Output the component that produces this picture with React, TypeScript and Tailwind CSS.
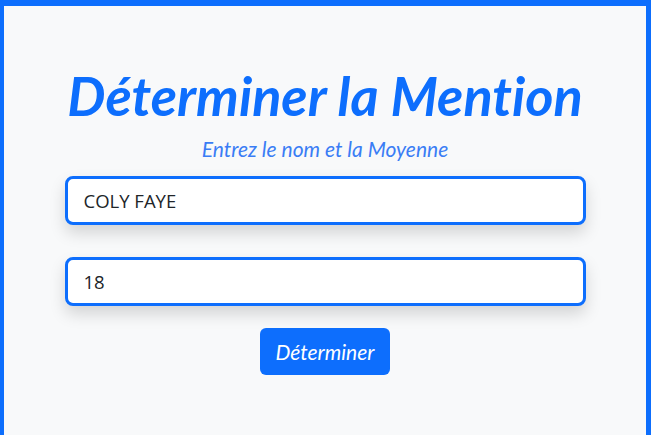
import React from 'react';

export default function App() {
  return (
    <div className="h-[435px] border-t-[6px] border-l-4 border-r-[5px] border-[#0d6efd] bg-[#f8f9fa] font-['Lato',sans-serif] [font-variant-ligatures:none]">
      <div className="mx-auto flex w-[521px] flex-col items-center pt-[60px]">
        <h1 className="text-[54px] leading-[60px] font-bold italic text-[#0d6efd]">Déterminer la Mention</h1>
        <p className="mt-[10px] text-[21px] leading-[26px] italic text-[#3a7df5]">Entrez le nom et la Moyenne</p>
        <input
          readOnly
          value="COLY FAYE"
          className="mt-[14px] h-[49px] w-full rounded-lg border-[3px] border-[#0d6efd] bg-white px-[16px] font-['Open_Sans',sans-serif] text-[18.5px] text-[#212529] shadow-[0_8px_16px_rgba(0,0,0,0.15)] outline-none"
        />
        <input
          readOnly
          value="18"
          className="mt-[32px] h-[49px] w-full rounded-lg border-[3px] border-[#0d6efd] bg-white px-[16px] font-['Open_Sans',sans-serif] text-[18.5px] text-[#212529] shadow-[0_8px_16px_rgba(0,0,0,0.15)] outline-none"
        />
        <button className="mt-[22px] h-[47px] w-[130px] rounded-md bg-[#0d6efd] text-[21px] italic text-white">Déterminer</button>
      </div>
    </div>
  );
}
